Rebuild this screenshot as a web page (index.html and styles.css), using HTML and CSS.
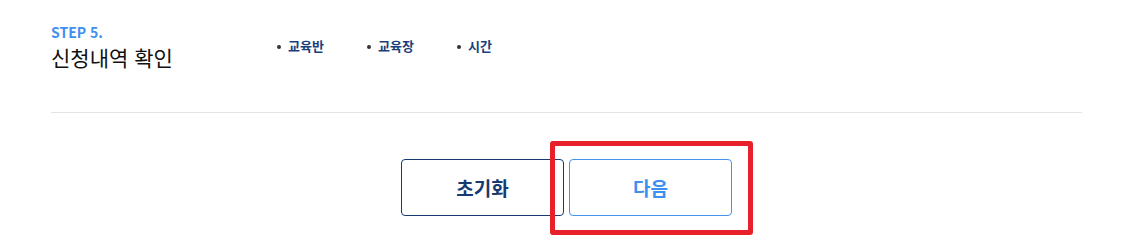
FILE: index.html
```html
<!DOCTYPE html>
<html lang="ko">
<head>
<meta charset="utf-8">
<title>신청내역 확인</title>
<link rel="stylesheet" href="styles.css">
</head>
<body>
<div class="wrap">
  <div class="step-head">
    <div class="step-title">
      <div class="step-no">STEP 5.</div>
      <h2 class="step-name">신청내역 확인</h2>
    </div>
    <ul class="step-items">
      <li>교육반</li>
      <li>교육장</li>
      <li>시간</li>
    </ul>
  </div>
  <div class="btn-row">
    <button class="btn btn-reset" type="button">초기화</button>
    <div class="btn-focus">
      <button class="btn btn-next" type="button">다음</button>
      <span class="highlight"></span>
    </div>
  </div>
</div>
</body>
</html>
```
FILE: styles.css
```css
* { box-sizing: border-box; }
html, body {
  min-height: 250px;
}
body {
  margin: 0;
  background: #fff;
  font-family: "Noto Sans CJK KR", "Noto Sans", sans-serif;
}
.wrap {
  width: 1031px;
  margin-left: 51px;
  padding-bottom: 34px;
}
.step-head {
  display: flex;
  align-items: flex-start;
  padding-top: 22px;
  height: 113px;
  border-bottom: 1px solid #e3e3e3;
}
.step-title {
  width: 226px;
}
.step-no {
  color: #3d8ff0;
  font-size: 14px;
  font-weight: 600;
  line-height: 20px;
}
.step-name {
  margin: 0;
  font-size: 21px;
  font-weight: 400;
  line-height: 30px;
  color: #111;
}
.step-items {
  display: flex;
  list-style: none;
  margin: 14px 0 0;
  padding: 0;
}
.step-items li {
  width: 90px;
  position: relative;
  padding-left: 11px;
  font-size: 13px;
  font-weight: 700;
  line-height: 20px;
  color: #1b3f7c;
}
.step-items li::before {
  content: "";
  position: absolute;
  left: 0;
  top: 9px;
  width: 4px;
  height: 4px;
  border-radius: 50%;
  background: #333;
}
.btn-row {
  display: flex;
  justify-content: center;
  gap: 5px;
  padding-top: 46px;
}
.btn-focus {
  position: relative;
}
.btn {
  width: 163px;
  height: 57px;
  background: #fff;
  border-radius: 4px;
  font-family: inherit;
  font-size: 19px;
  font-weight: 700;
  cursor: pointer;
  display: block;
}
.btn-reset {
  border: 1px solid #173a70;
  color: #173a70;
}
.btn-next {
  border: 1px solid #4494ee;
  color: #3d8ff0;
  font-weight: 600;
}
.highlight {
  position: absolute;
  top: -18px;
  left: -19px;
  right: -21px;
  bottom: -19px;
  border: 5px solid #e8202a;
  border-radius: 3px;
  pointer-events: none;
}
```
